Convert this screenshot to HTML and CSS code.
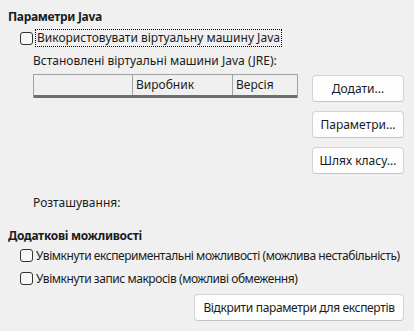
FILE: index.html
```html
<!DOCTYPE html>
<html lang="uk">
<head>
<meta charset="utf-8">
<link rel="stylesheet" href="styles.css">
</head>
<body>
<div class="page">
  <section class="group java">
    <h2 class="heading">Параметри Java</h2>
    <label class="check first">
      <span class="box"></span>
      <span class="focus">Використовувати віртуальну машину Java</span>
    </label>
    <div class="inner">
      <div class="caption">Встановлені віртуальні машини Java (JRE):</div>
      <div class="jre">
        <div class="table">
          <div class="thead">
            <div class="col c1"></div>
            <div class="col c2">Виробник</div>
            <div class="col c3">Версія</div>
          </div>
        </div>
        <div class="buttons">
          <button class="btn">Додати...</button>
          <button class="btn">Параметри...</button>
          <button class="btn">Шлях класу...</button>
        </div>
      </div>
      <div class="location">Розташування:</div>
    </div>
  </section>
  <section class="group extra">
    <h2 class="heading">Додаткові можливості</h2>
    <label class="check">
      <span class="box"></span>
      <span class="tight">Увімкнути експериментальні можливості (можлива нестабільність)</span>
    </label>
    <label class="check">
      <span class="box"></span>
      <span class="tight">Увімкнути запис макросів (можливі обмеження)</span>
    </label>
    <div class="expert-row">
      <button class="btn wide">Відкрити параметри для експертів</button>
    </div>
  </section>
</div>
</body>
</html>
```
FILE: styles.css
```css
html, body {
  margin: 0;
  padding: 0;
  background: #f0f0f0;
}
body {
  font-family: "Noto Sans", "Open Sans", sans-serif;
  font-size: 12px;
  color: #1b1b1b;
  width: 414px;
  height: 331px;
  overflow: hidden;
}
.page {
  display: flex;
  flex-direction: column;
  padding: 9px 10px 0 8px;
}
.heading {
  margin: 0;
  font-size: 12px;
  font-weight: 700;
  line-height: 16px;
  letter-spacing: -0.3px;
}
.check {
  display: flex;
  align-items: center;
  gap: 3px;
  padding-left: 12px;
  height: 23px;
  line-height: 16px;
  white-space: nowrap;
}
.check.first {
  margin-top: 5px;
  height: 16px;
}
.tight {
  letter-spacing: -0.45px;
}
.box {
  width: 11px;
  height: 11px;
  border: 1px solid #333;
  border-radius: 3px;
  background: #f7f7f7;
  flex: none;
}
.focus {
  outline: 1px dotted #000;
  outline-offset: 0;
  padding: 0 1px;
}
.inner {
  padding-left: 25px;
  display: flex;
  flex-direction: column;
}
.caption {
  margin-top: 7px;
  line-height: 16px;
}
.jre {
  display: flex;
  gap: 14px;
  margin-top: 5px;
  align-items: flex-start;
}
.table {
  width: 264px;
  border: 1px solid #a0a0a0;
  border-bottom: none;
}
.thead {
  display: flex;
  height: 20px;
  border-bottom: 3px solid #6e6e6e;
}
.col {
  line-height: 20px;
  padding-left: 3px;
  box-sizing: border-box;
}
.c1 { width: 99px; border-right: 1px solid #a0a0a0; }
.c2 { width: 100px; border-right: 1px solid #a0a0a0; }
.c3 { flex: 1; }
.buttons {
  display: flex;
  flex-direction: column;
  gap: 9px;
  margin-top: 1px;
}
.btn {
  font: inherit;
  color: #1b1b1b;
  width: 92px;
  height: 27px;
  background: #fdfdfd;
  border: 1px solid #d3d3d3;
  border-bottom-color: #c4c4c4;
  border-radius: 4px;
  padding: 0;
}
.location {
  margin-top: 21px;
  line-height: 16px;
}
.extra {
  margin-top: 17px;
}
.expert-row {
  display: flex;
  justify-content: flex-end;
  margin-top: 4px;
}
.btn.wide {
  width: 210px;
  letter-spacing: -0.35px;
}
```
